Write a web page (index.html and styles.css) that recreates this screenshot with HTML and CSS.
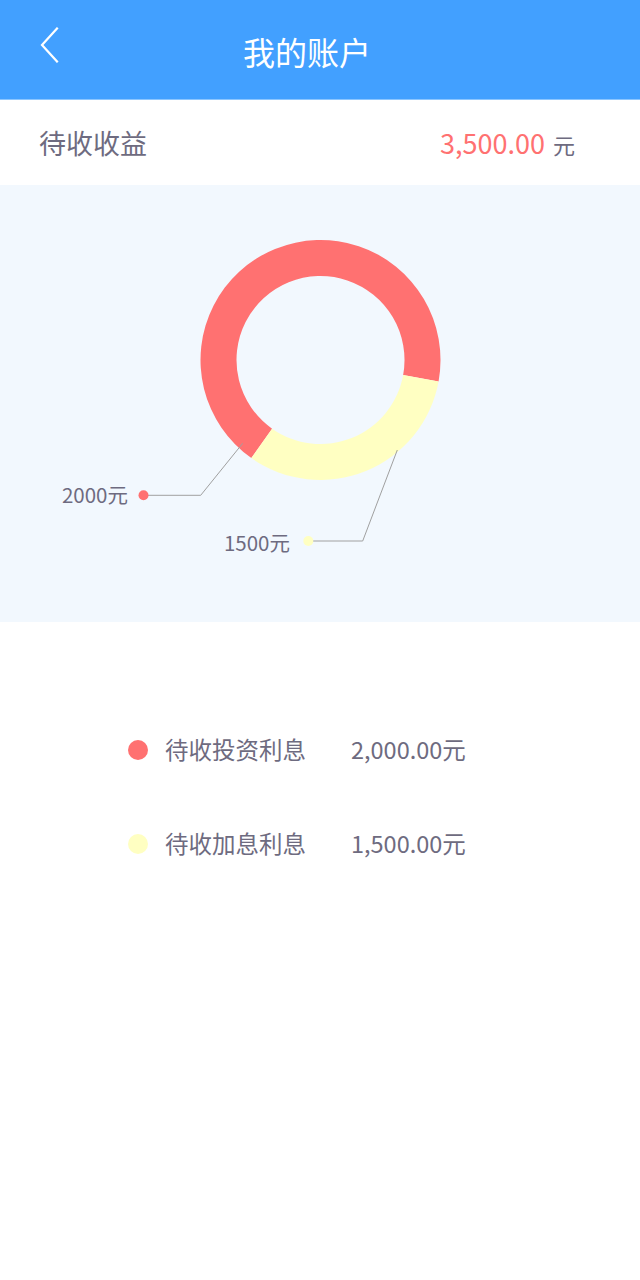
FILE: index.html
```html
<!DOCTYPE html>
<html lang="zh-CN">
<head>
<meta charset="utf-8">
<title>我的账户</title>
<link rel="stylesheet" href="styles.css">
</head>
<body>
<div class="page">
  <header class="topbar">
    <svg class="back" width="20" height="36" viewBox="0 0 20 36">
      <polyline points="17,1.5 2,18 17,34.5" fill="none" stroke="#ffffff" stroke-width="2.2" stroke-linecap="square"/>
    </svg>
    <h1 class="title">我的账户</h1>
  </header>
  <section class="summary">
    <span class="summary-label">待收收益</span>
    <span class="summary-value"><span class="amount">3,500.00</span><span class="unit">元</span></span>
  </section>
  <section class="chart">
    <svg width="640" height="437" viewBox="0 0 640 437">
      <path d="M438.57 196.46 A120 120 0 1 0 251.33 273.05 L272.08 243.64 A84 84 0 1 1 403.15 190.02 Z" fill="#ff7171"/>
      <path d="M438.57 196.46 A120 120 0 0 1 251.33 273.05 L272.08 243.64 A84 84 0 0 0 403.15 190.02 Z" fill="#ffffc2"/>
      <polyline points="242.7,258.3 200.7,310.3 148,310.3" fill="none" stroke="#a0a0a0" stroke-width="1"/>
      <circle cx="143.5" cy="310.3" r="5" fill="#ff7171"/>
      <text x="128" y="317.5" text-anchor="end" class="clabel">2000元</text>
      <polyline points="397.3,265 362.7,356 313,356" fill="none" stroke="#a0a0a0" stroke-width="1"/>
      <circle cx="308.3" cy="356" r="5" fill="#ffffc2"/>
      <text x="290" y="365.5" text-anchor="end" class="clabel">1500元</text>
    </svg>
  </section>
  <section class="legend">
    <div class="legend-row">
      <span class="dot dot-red"></span>
      <span class="legend-name">待收投资利息</span>
      <span class="legend-value">2,000.00元</span>
    </div>
    <div class="legend-row">
      <span class="dot dot-yellow"></span>
      <span class="legend-name">待收加息利息</span>
      <span class="legend-value">1,500.00元</span>
    </div>
  </section>
</div>
</body>
</html>
```
FILE: styles.css
```css
* { box-sizing: border-box; }
html, body { margin: 0; padding: 0; background: #ffffff; }
body {
  font-family: "Noto Sans CJK SC", "Noto Sans", sans-serif;
  color: #6e6b80;
}
.page { width: 640px; }
.topbar {
  position: relative;
  height: 100px;
  background: #42a0ff;
  border-bottom: 1px solid #8cc6ff;
  display: flex;
  align-items: center;
  justify-content: center;
}
.back {
  position: absolute;
  left: 40px;
  top: 27px;
}
.title {
  margin: 0 26px 0 0;
  font-size: 32px;
  font-weight: 400;
  color: #ffffff;
  line-height: 1;
  position: relative;
  top: 1px;
}
.summary {
  height: 85px;
  display: flex;
  align-items: center;
  justify-content: space-between;
  padding: 0 65px 0 39px;
}
.summary-label { font-size: 27px; line-height: 1; }
.summary-value { display: flex; align-items: baseline; gap: 8px; }
.amount { font-size: 27px; color: #ff7171; line-height: 1; }
.unit { font-size: 22px; line-height: 1; }
.chart {
  height: 437px;
  background: #f2f8fe;
}
.chart svg { display: block; }
.clabel {
  font-family: "Noto Sans CJK SC", "Noto Sans", sans-serif;
  font-size: 20.5px;
  fill: #6e6b80;
}
.legend {
  padding-top: 114px;
  display: flex;
  flex-direction: column;
  gap: 66px;
}
.legend-row {
  display: flex;
  align-items: center;
  height: 28px;
  padding-left: 128px;
}
.dot {
  width: 20px;
  height: 20px;
  border-radius: 50%;
  flex: none;
}
.dot-red { background: #ff7171; }
.dot-yellow { background: #ffffc2; }
.legend-name {
  margin-left: 17px;
  width: 186px;
  font-size: 23.5px;
  line-height: 1;
}
.legend-value {
  font-size: 23.5px;
  line-height: 1;
}
```
